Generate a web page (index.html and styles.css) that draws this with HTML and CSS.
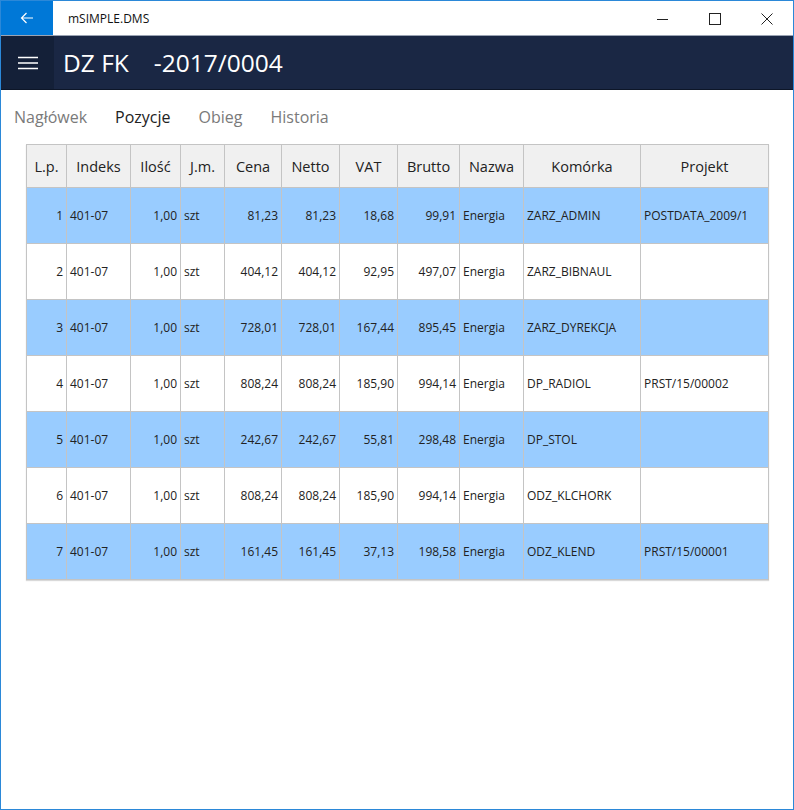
FILE: index.html
```html
<!DOCTYPE html>
<html lang="pl">

<head>
    <meta charset="UTF-8">
    <meta name="viewport" content="width=device-width, initial-scale=1.0">
    <title>mSIMPLE.DMS</title>
    <link rel="stylesheet" href="styles.css">
</head>

<body>

    <div class="window">
        <div class="titlebar">
            <div class="back-btn">
                <svg width="16" height="16" viewBox="0 0 16 16">
                    <path d="M14 8H2.5M7.5 3L2.5 8l5 5" fill="none" stroke="#fff" stroke-width="1.2"/>
                </svg>
            </div>
            <div class="app-name">mSIMPLE.DMS</div>
            <div class="controls">
                <div class="ctrl">
                    <svg width="12" height="12" viewBox="0 0 12 12"><path d="M0 6.5h11" stroke="#222" stroke-width="1"/></svg>
                </div>
                <div class="ctrl">
                    <svg width="12" height="12" viewBox="0 0 12 12"><rect x="0.5" y="0.5" width="11" height="11" fill="none" stroke="#222" stroke-width="1"/></svg>
                </div>
                <div class="ctrl">
                    <svg width="12" height="12" viewBox="0 0 12 12"><path d="M0.5 0.5l11 11M11.5 0.5l-11 11" stroke="#222" stroke-width="1"/></svg>
                </div>
            </div>
        </div>

        <div class="app-header">
            <div class="menu-btn">
                <svg width="22" height="16" viewBox="0 0 22 16">
                    <path d="M1 2.5h20M1 8h20M1 13.5h20" stroke="#fff" stroke-width="1.4"/>
                </svg>
            </div>
            <h1 class="doc-title">DZ FK<span class="doc-number">-2017/0004</span></h1>
        </div>

        <div class="tabs">
            <span class="tab">Nagłówek</span>
            <span class="tab active">Pozycje</span>
            <span class="tab">Obieg</span>
            <span class="tab">Historia</span>
        </div>

        <div class="grid-wrap">
            <table class="grid">
                <colgroup>
                    <col style="width:40px">
                    <col style="width:64px">
                    <col style="width:50px">
                    <col style="width:44px">
                    <col style="width:57px">
                    <col style="width:58px">
                    <col style="width:58px">
                    <col style="width:62px">
                    <col style="width:64px">
                    <col style="width:117px">
                    <col style="width:128px">
                </colgroup>
                <thead>
                    <tr>
                        <th>L.p.</th>
                        <th>Indeks</th>
                        <th>Ilość</th>
                        <th>J.m.</th>
                        <th>Cena</th>
                        <th>Netto</th>
                        <th>VAT</th>
                        <th>Brutto</th>
                        <th>Nazwa</th>
                        <th>Komórka</th>
                        <th>Projekt</th>
                    </tr>
                </thead>
                <tbody id="rows"></tbody>
            </table>
        </div>
    </div>

    <script>
        const items = [
            ['1', '401-07', '1,00', 'szt', '81,23', '81,23', '18,68', '99,91', 'Energia', 'ZARZ_ADMIN', 'POSTDATA_2009/1'],
            ['2', '401-07', '1,00', 'szt', '404,12', '404,12', '92,95', '497,07', 'Energia', 'ZARZ_BIBNAUL', ''],
            ['3', '401-07', '1,00', 'szt', '728,01', '728,01', '167,44', '895,45', 'Energia', 'ZARZ_DYREKCJA', ''],
            ['4', '401-07', '1,00', 'szt', '808,24', '808,24', '185,90', '994,14', 'Energia', 'DP_RADIOL', 'PRST/15/00002'],
            ['5', '401-07', '1,00', 'szt', '242,67', '242,67', '55,81', '298,48', 'Energia', 'DP_STOL', ''],
            ['6', '401-07', '1,00', 'szt', '808,24', '808,24', '185,90', '994,14', 'Energia', 'ODZ_KLCHORK', ''],
            ['7', '401-07', '1,00', 'szt', '161,45', '161,45', '37,13', '198,58', 'Energia', 'ODZ_KLEND', 'PRST/15/00001']
        ];

        // which columns hold numbers (right aligned)
        const numCols = [0, 2, 4, 5, 6, 7];

        const tbody = document.getElementById('rows');
        items.forEach((row, i) => {
            const tr = document.createElement('tr');
            if (i % 2 === 0) tr.className = 'alt';
            row.forEach((val, c) => {
                const td = document.createElement('td');
                td.textContent = val;
                if (numCols.includes(c)) td.className = 'num';
                tr.appendChild(td);
            });
            tbody.appendChild(tr);
        });
    </script>
</body>

</html>
```

FILE: styles.css
```css
body {
    margin: 0;
    padding: 0;
    font-family: "Open Sans", "Noto Sans", sans-serif;
    background-color: #fff;
}

.window {
    width: 794px;
    height: 810px;
    box-sizing: border-box;
    border: 1px solid #2b88d8;
    background-color: #fff;
    overflow: hidden;
}

.titlebar {
    display: flex;
    align-items: center;
    height: 34px;
    background-color: #fff;
}

.back-btn {
    width: 52px;
    height: 34px;
    background-color: #0078d7;
    display: flex;
    align-items: center;
    justify-content: center;
}

.app-name {
    margin-left: 15px;
    font-size: 12px;
    color: #111;
}

.controls {
    margin-left: auto;
    display: flex;
}

.ctrl {
    width: 52px;
    height: 34px;
    display: flex;
    align-items: center;
    justify-content: center;
    padding-top: 2px;
    box-sizing: border-box;
}

.app-header {
    display: flex;
    align-items: center;
    height: 53px;
    background-color: #1a2744;
    border-top: 1px solid #9aa3b3;
    border-bottom: 1px solid #0d1628;
}

.menu-btn {
    width: 53px;
    height: 53px;
    background-color: #142038;
    display: flex;
    align-items: center;
    justify-content: center;
}

.doc-title {
    margin: 0 0 0 9px;
    font-size: 24.5px;
    font-weight: normal;
    color: #fff;
}

.doc-number {
    margin-left: 25px;
}

.tabs {
    display: flex;
    gap: 28px;
    height: 54px;
    align-items: center;
    padding-left: 13px;
}

.tab {
    font-size: 16px;
    color: #7a7a7a;
}

.tab.active {
    color: #222;
}

.grid-wrap {
    padding-left: 25px;
}

.grid {
    width: 742px;
    table-layout: fixed;
    border-collapse: collapse;
    font-size: 12px;
    color: #222;
    box-shadow: 0 1px 1px rgba(0, 0, 0, 0.15);
}

.grid th,
.grid td {
    border: 1px solid #c4c4c4;
    white-space: nowrap;
    overflow: hidden;
}

.grid th {
    height: 42px;
    background-color: #f0f0f0;
    font-size: 14.5px;
    font-weight: normal;
    text-align: center;
    padding: 0;
}

.grid td {
    height: 55px;
    padding: 0 3px;
    text-align: left;
}

.grid td.num {
    text-align: right;
}

.grid tr.alt td {
    background-color: #99ccff;
}
```
